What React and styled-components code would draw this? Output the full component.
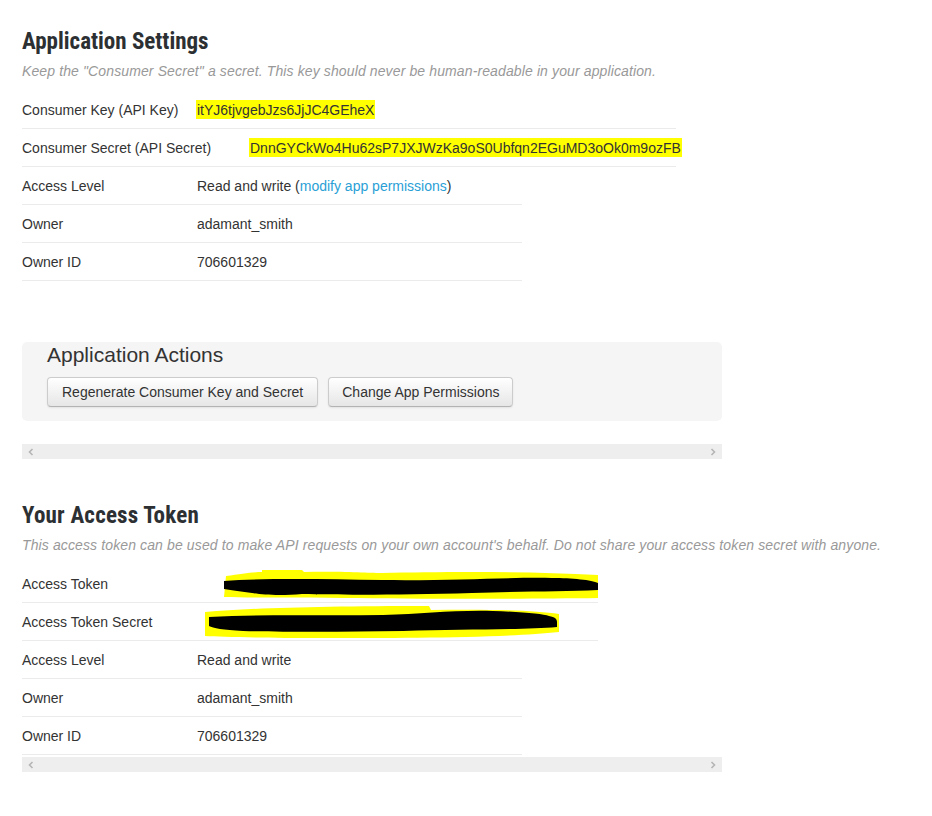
import React from "react";
import styled, { createGlobalStyle } from "styled-components";

const GlobalStyle = createGlobalStyle`
    body {
        margin: 0;
        background: #fff;
        font-family: "Liberation Sans", Arial, sans-serif;
        font-size: 14px;
        color: #333;
    }
`;

const Page = styled.div`
    padding: 30px 0 40px 22px;
`;

const Heading = styled.h2`
    margin: 0;
    font-family: "Liberation Sans Narrow", "Roboto Condensed", "Liberation Sans", sans-serif;
    font-weight: bold;
    font-size: 23px;
    line-height: 24px;
    color: #2c3033;
    letter-spacing: ${(p) => (p.$loose ? "0.2px" : "0")};
`;

const Note = styled.p`
    margin: 7px 0 10px;
    font-style: italic;
    color: #999;
    line-height: 20px;
    letter-spacing: 0.12px;
`;

const Row = styled.div`
    display: flex;
    align-items: center;
    width: ${(p) => p.$width}px;
    height: 37px;
    border-bottom: 1px solid #ebebeb;
`;

const Label = styled.div`
    flex: 0 0 ${(p) => p.$width}px;
`;

const Value = styled.div`
    flex: 1;
    white-space: nowrap;
`;

const Marked = styled.span`
    background: #ffff00;
    padding: 2px 1px 1px;
    margin-left: -1px;
`;

const Link = styled.a`
    color: #2a9fd6;
    text-decoration: none;
`;

const Actions = styled.div`
    margin-top: 61px;
    width: 675px;
    padding: 2px 0 14px 25px;
    background: #f5f5f5;
    border-radius: 5px;
`;

const ActionsTitle = styled.h3`
    margin: 0 0 11px;
    font-weight: normal;
    font-size: 21px;
    line-height: 22px;
    color: #333;
`;

const ButtonBar = styled.div`
    display: flex;
    gap: 10px;
`;

const Button = styled.button`
    height: 30px;
    padding: 0 ${(p) => p.$pad}px;
    font-family: "Liberation Sans", Arial, sans-serif;
    font-size: 14px;
    color: #333;
    background: linear-gradient(#ffffff, #e6e6e6);
    border: 1px solid #cccccc;
    border-bottom-color: #b3b3b3;
    border-radius: 4px;
    box-shadow: inset 0 1px 0 rgba(255, 255, 255, 0.2), 0 1px 2px rgba(0, 0, 0, 0.08);
`;

const Scroller = styled.div`
    display: flex;
    align-items: center;
    justify-content: space-between;
    width: 700px;
    height: 15px;
    margin-top: ${(p) => p.$top}px;
    padding: 0 6px;
    box-sizing: border-box;
    background: #eeeeee;
`;

const Section = styled.section`
    margin-top: 45px;
`;

const Chevron = ({ dir }) => (
    <svg width="6" height="8" viewBox="0 0 6 8">
        <path
            d={dir === "left" ? "M4.5 1 L1.5 4 L4.5 7" : "M1.5 1 L4.5 4 L1.5 7"}
            fill="none"
            stroke="#b5b5b5"
            strokeWidth="1.6"
        />
    </svg>
);

const ScrollBar = ({ top }) => (
    <Scroller $top={top}>
        <Chevron dir="left" />
        <Chevron dir="right" />
    </Scroller>
);

// hand-drawn redaction marks over the token values
const Redacted = ({ variant }) =>
    variant === "token" ? (
        <svg width="378" height="32" viewBox="0 0 378 32" style={{ display: "block" }}>
            <path
                d="M4 8 C20 6 30 4 40 4 L40 2 L80 2 L82 4 C120 3 150 5 160 5 C220 4 300 3 376 7 L376 30 C300 31 200 31 120 30 C80 29 30 30 2 29 Z"
                fill="#ffff00"
            />
            <path
                d="M2 13 C40 10 100 11 160 12 C230 13 290 9 330 10 C350 10 370 12 376 15 L376 22 C340 24 300 23 250 25 C180 27 120 27 80 26 C60 28 40 27 30 25 C20 24 10 22 2 21 Z"
                fill="#000"
            />
        </svg>
    ) : (
        <svg width="360" height="36" viewBox="0 0 360 36" style={{ display: "block" }}>
            <path
                d="M2 8 C50 4 120 2 226 2 L228 6 C280 5 330 6 356 10 L356 28 C300 34 200 34 120 34 C60 34 20 33 2 32 Z"
                fill="#ffff00"
            />
            <path
                d="M6 13 C60 10 120 12 180 11 C220 10 250 6 290 7 C320 8 340 10 346 12 C352 13 354 15 354 18 L354 23 C320 26 260 25 200 27 C140 28 80 28 40 27 C20 26 10 24 6 22 Z"
                fill="#000"
            />
        </svg>
    );

const settings = [
    { label: "Access Level", value: "perm" },
    { label: "Owner", value: "adamant_smith" },
    { label: "Owner ID", value: "706601329" },
];

const App = () => (
    <Page>
        <GlobalStyle />
        <Heading>Application Settings</Heading>
        <Note>
            Keep the "Consumer Secret" a secret. This key should never be human-readable in your
            application.
        </Note>
        <Row $width={654}>
            <Label $width={175}>Consumer Key (API Key)</Label>
            <Value>
                <Marked>itYJ6tjvgebJzs6JjJC4GEheX</Marked>
            </Value>
        </Row>
        <Row $width={654}>
            <Label $width={228}>Consumer Secret (API Secret)</Label>
            <Value>
                <Marked>DnnGYCkWo4Hu62sP7JXJWzKa9oS0Ubfqn2EGuMD3oOk0m9ozFB</Marked>
            </Value>
        </Row>
        {settings.map((s) => (
            <Row key={s.label} $width={500}>
                <Label $width={175}>{s.label}</Label>
                <Value>
                    {s.value === "perm" ? (
                        <>
                            Read and write (<Link href="#">modify app permissions</Link>)
                        </>
                    ) : (
                        s.value
                    )}
                </Value>
            </Row>
        ))}

        <Actions>
            <ActionsTitle>Application Actions</ActionsTitle>
            <ButtonBar>
                <Button $pad={14}>Regenerate Consumer Key and Secret</Button>
                <Button $pad={13}>Change App Permissions</Button>
            </ButtonBar>
        </Actions>
        <ScrollBar top={23} />

        <Section>
            <Heading $loose>Your Access Token</Heading>
            <Note>
                This access token can be used to make API requests on your own account's behalf.
                Do not share your access token secret with anyone.
            </Note>
            <Row $width={576}>
                <Label $width={200}>Access Token</Label>
                <Value>
                    <Redacted variant="token" />
                </Value>
            </Row>
            <Row $width={576}>
                <Label $width={181}>Access Token Secret</Label>
                <Value>
                    <Redacted variant="secret" />
                </Value>
            </Row>
            <Row $width={500}>
                <Label $width={175}>Access Level</Label>
                <Value>Read and write</Value>
            </Row>
            <Row $width={500}>
                <Label $width={175}>Owner</Label>
                <Value>adamant_smith</Value>
            </Row>
            <Row $width={500}>
                <Label $width={175}>Owner ID</Label>
                <Value>706601329</Value>
            </Row>
            <ScrollBar top={2} />
        </Section>
    </Page>
);

export default App;
